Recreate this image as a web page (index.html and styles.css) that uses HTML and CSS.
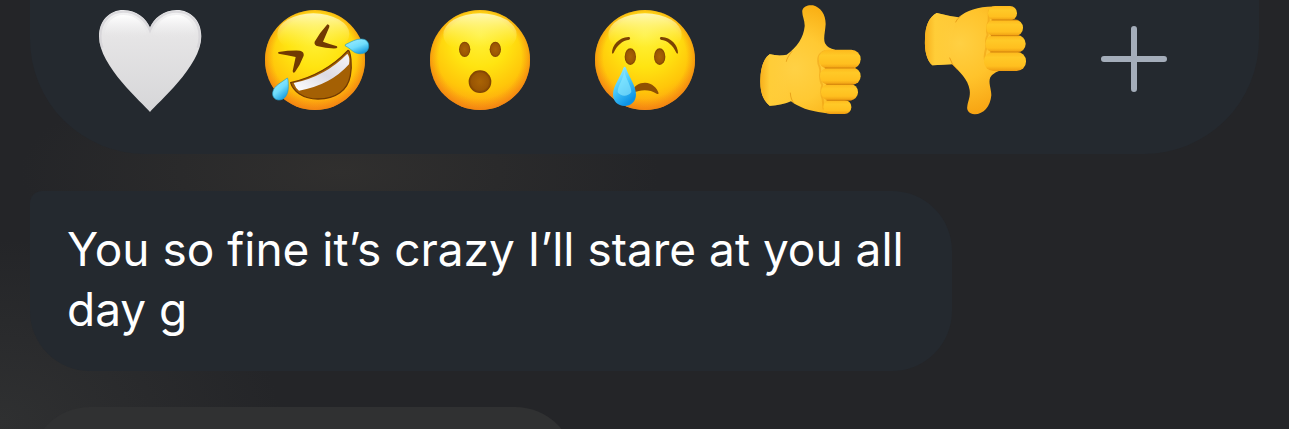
FILE: index.html
```html
<!DOCTYPE html>
<html lang="en">
<head>
  <meta charset="UTF-8">
  <meta name="viewport" content="width=device-width, initial-scale=1.0">
  <title>Message reactions</title>
  <link rel="stylesheet" href="styles.css">
</head>
<body>
  <!-- shared gradients -->
  <svg class="defs" aria-hidden="true">
    <defs>
      <radialGradient id="face" cx="195" cy="130" r="215" fx="195" fy="105" gradientUnits="userSpaceOnUse">
        <stop offset="0" stop-color="#fff23c"/>
        <stop offset="0.4" stop-color="#ffe411"/>
        <stop offset="0.7" stop-color="#ffc60a"/>
        <stop offset="1" stop-color="#fd8f14"/>
      </radialGradient>
      <radialGradient id="rim" cx="195" cy="172" r="155" gradientUnits="userSpaceOnUse">
        <stop offset="0.8" stop-color="#f58a10" stop-opacity="0"/>
        <stop offset="1" stop-color="#f07d12" stop-opacity="0.7"/>
      </radialGradient>
      <linearGradient id="shine" x1="0" y1="0" x2="0" y2="1">
        <stop offset="0" stop-color="#fffbd0" stop-opacity="0.85"/>
        <stop offset="0.8" stop-color="#fff46a" stop-opacity="0"/>
      </linearGradient>
      <linearGradient id="heart" x1="0" y1="0" x2="0" y2="1">
        <stop offset="0" stop-color="#f4f4f5"/>
        <stop offset="0.25" stop-color="#e6e5e6"/>
        <stop offset="1" stop-color="#d6d6d8"/>
      </linearGradient>
      <linearGradient id="heart-shine" x1="0" y1="0" x2="0" y2="1">
        <stop offset="0" stop-color="#ffffff"/>
        <stop offset="1" stop-color="#e6e5e6" stop-opacity="0"/>
      </linearGradient>
      <linearGradient id="tear" x1="0" y1="0" x2="0.5" y2="1">
        <stop offset="0" stop-color="#b5f3ff"/>
        <stop offset="0.5" stop-color="#4fcdfa"/>
        <stop offset="1" stop-color="#0c93e6"/>
      </linearGradient>
      <linearGradient id="tear-small" x1="0" y1="0" x2="0.6" y2="1">
        <stop offset="0" stop-color="#a5f0ff"/>
        <stop offset="0.6" stop-color="#6fdcfb"/>
        <stop offset="1" stop-color="#1d9fe0"/>
      </linearGradient>
      <linearGradient id="teeth" x1="0" y1="1" x2="1" y2="0">
        <stop offset="0" stop-color="#ffffff"/>
        <stop offset="0.5" stop-color="#dddbe3"/>
        <stop offset="1" stop-color="#f7f6f8"/>
      </linearGradient>
      <radialGradient id="mouth">
        <stop offset="0" stop-color="#a96305"/>
        <stop offset="0.75" stop-color="#9a5603"/>
        <stop offset="1" stop-color="#7b3f02"/>
      </radialGradient>
      <radialGradient id="hand" cx="150" cy="205" r="200" gradientUnits="userSpaceOnUse">
        <stop offset="0" stop-color="#ffd145"/>
        <stop offset="0.5" stop-color="#ffc933"/>
        <stop offset="1" stop-color="#f9ae12"/>
      </radialGradient>
      <radialGradient id="hand-down" cx="150" cy="130" r="220" gradientUnits="userSpaceOnUse">
        <stop offset="0" stop-color="#ffd043"/>
        <stop offset="0.5" stop-color="#ffc32b"/>
        <stop offset="1" stop-color="#f7a312"/>
      </radialGradient>
      <linearGradient id="cuff" x1="0" y1="0" x2="1" y2="0">
        <stop offset="0" stop-color="#f8b01c"/>
        <stop offset="0.3" stop-color="#ffcd38"/>
        <stop offset="1" stop-color="#ffcf42" stop-opacity="0"/>
      </linearGradient>
      <linearGradient id="finger" x1="0" y1="0" x2="0" y2="1">
        <stop offset="0" stop-color="#fdb81c"/>
        <stop offset="0.3" stop-color="#ffc927"/>
        <stop offset="0.75" stop-color="#ffbf1f"/>
        <stop offset="1" stop-color="#ee9b11"/>
      </linearGradient>
    </defs>
  </svg>

  <div class="reactions">
    <button type="button" class="reaction" aria-label="White heart">
      <svg viewBox="15 0 390 375">
        <path fill="url(#heart)" d="M210 336C189 310 57 199 57 109C57 62 89 30 130 30C170 30 199 56 210 83C221 56 250 30 290 30C332 30 364 62 364 109C364 199 231 310 210 336Z"/>
        <path fill="none" stroke="#d1d0d4" stroke-width="7" stroke-opacity="0.7" d="M67 143C61 130 61 116 61 109C61 64 91 35 130 35C170 35 198 61 210 91C222 61 250 35 290 35C330 35 359 64 359 109C359 116 359 130 353 143"/>
        <path fill="url(#heart-shine)" d="M74 104C76 69 99 45 131 45C169 45 192 72 202 103C168 123 108 121 74 104ZM218 103C228 72 251 45 289 45C321 45 343 69 346 104C312 121 252 123 218 103Z"/>
      </svg>
    </button>

    <button type="button" class="reaction" aria-label="Rolling on the floor laughing">
      <svg viewBox="0 0 390 375">
        <circle cx="195" cy="180" r="150" fill="url(#face)"/>
        <circle cx="195" cy="180" r="150" fill="url(#rim)"/>
        <ellipse cx="190" cy="102" rx="108" ry="62" fill="url(#shine)"/>
        <g fill="#713a02">
          <path d="M233 73Q240 75 238 81L219 125Q244 134 261 139Q264 143 259 145Q229 146 204 139Q191 135 194 125Q208 99 231 74Z"/>
          <path d="M86 156Q118 151 150 152Q163 155 161 167Q150 196 135 216Q129 221 128 213L137 171Q111 165 86 161Q82 158 86 156Z"/>
        </g>
        <path fill="#a46004" stroke="#713a02" stroke-width="4" stroke-linejoin="round" d="M122 248Q225 224 294 151C302 151 307 199 301 227C293 271 258 297 204 297C158 297 129 273 122 248Z"/>
        <path fill="url(#teeth)" d="M131 249Q226 229 292 161Q301 171 297 193Q241 256 147 272Q137 265 131 249Z"/>
        <path fill="url(#tear-small)" stroke="#259fc6" stroke-width="2" d="M112 234Q115 237 115 260C115 286 102 300 87 300C72 300 65 287 69 274C73 257 92 249 112 234Z"/>
        <path fill="url(#tear-small)" stroke="#259fc6" stroke-width="2" d="M286 134C305 125 316 117 334 117C349 117 357 127 356 139C355 155 344 162 328 161C309 160 303 145 286 138Z"/>
      </svg>
    </button>

    <button type="button" class="reaction" aria-label="Surprised face">
      <svg viewBox="0 0 390 375">
        <circle cx="195" cy="180" r="150" fill="url(#face)"/>
        <circle cx="195" cy="180" r="150" fill="url(#rim)"/>
        <ellipse cx="195" cy="104" rx="110" ry="64" fill="url(#shine)"/>
        <ellipse cx="149" cy="148" rx="17" ry="23" fill="url(#mouth)"/>
        <ellipse cx="241" cy="148" rx="17" ry="23" fill="url(#mouth)"/>
        <circle cx="195" cy="245" r="34" fill="url(#mouth)"/>
      </svg>
    </button>

    <button type="button" class="reaction" aria-label="Crying face">
      <svg viewBox="0 0 390 375">
        <circle cx="195" cy="180" r="150" fill="url(#face)"/>
        <circle cx="195" cy="180" r="150" fill="url(#rim)"/>
        <ellipse cx="195" cy="104" rx="110" ry="64" fill="url(#shine)"/>
        <ellipse cx="151" cy="170" rx="17" ry="25" fill="url(#mouth)"/>
        <ellipse cx="239" cy="170" rx="17" ry="25" fill="url(#mouth)"/>
        <path fill="#7c4203" d="M96 160C95 136 119 109 148 111Q153 115 148 119C126 121 111 137 101 158Q98 162 96 160ZM294 160C295 136 271 109 242 111Q237 115 242 119C264 121 279 137 289 158Q292 162 294 160Z"/>
        <path fill="#8f5003" d="M157 277C161 256 178 248 195 248C216 249 232 264 236 280Q235 284 230 281C209 267 181 268 160 279Z"/>
        <path fill="url(#tear)" d="M130 204Q134 197 138 204C146 229 168 258 168 283C168 305 153 318 134 318C113 318 99 304 99 283C99 258 123 229 130 204Z"/>
        <path fill="#8fe9ff" fill-opacity="0.6" d="M133 213C138 238 154 258 154 276C144 291 123 291 113 277C112 260 130 238 133 213Z"/>
      </svg>
    </button>

    <button type="button" class="reaction" aria-label="Thumbs up">
      <svg viewBox="0 0 390 375">
        <path fill="url(#hand)" d="M74 163Q102 169 125 164C157 142 176 112 179 79C180 61 170 46 172 31C176 18 190 14 204 16C227 22 242 43 242 72C241 94 234 116 240 130Q249 146 270 149L286 334Q262 343 235 338C194 334 161 322 138 304Q112 316 74 317C52 300 45 272 46 239C47 207 54 177 74 163Z"/>
        <path fill="url(#cuff)" d="M74 163Q102 169 125 164Q111 228 138 304Q112 316 74 317C52 300 45 272 46 239C47 207 54 177 74 163Z"/>
        <path fill="none" stroke="#df9310" stroke-width="3" stroke-linecap="round" stroke-opacity="0.7" d="M124 184Q125 174 141 154M136 279Q137 300 147 309"/>
        <path fill="none" stroke="#e9970c" stroke-width="6" stroke-opacity="0.45" d="M242 153Q214 161 221 193Q228 207 225 227Q226 246 232 255Q225 275 233 297L236 328"/>
        <rect x="221" y="149" width="126" height="57" rx="28" fill="url(#finger)"/>
        <rect x="225" y="203" width="122" height="51" rx="25" fill="url(#finger)"/>
        <rect x="228" y="252" width="111" height="49" rx="24" fill="url(#finger)"/>
        <rect x="235" y="300" width="84" height="42" rx="20" fill="url(#finger)"/>
        <path fill="none" stroke="#c87508" stroke-width="3" stroke-linecap="round" stroke-opacity="0.8" d="M241 204H327M245 253H323M246 301H319"/>
      </svg>
    </button>

    <button type="button" class="reaction" aria-label="Thumbs down">
      <svg viewBox="0 0 390 375">
        <path fill="url(#hand-down)" d="M80 39Q116 48 146 52C170 31 210 18 258 20L286 207Q252 214 241 232C234 247 244 267 244 286C241 320 221 343 194 343C178 341 169 332 172 318C174 303 182 290 179 270C174 237 148 215 126 193Q98 195 67 196C50 180 43 152 45 116C46 78 57 51 80 39Z"/>
        <path fill="url(#cuff)" d="M80 39Q116 48 146 52Q111 119 126 193Q98 195 67 196C50 180 43 152 45 116C46 78 57 51 80 39Z"/>
        <path fill="none" stroke="#df8d0d" stroke-width="3" stroke-linecap="round" stroke-opacity="0.7" d="M137 66Q140 57 151 49M119 174Q123 192 143 210"/>
        <path fill="none" stroke="#e9970c" stroke-width="6" stroke-opacity="0.45" d="M237 29L236 64Q228 83 233 105Q226 116 229 143Q221 170 226 186Q231 202 249 208"/>
        <rect x="234" y="18" width="87" height="43" rx="21" fill="url(#finger)"/>
        <rect x="229" y="59" width="110" height="49" rx="24" fill="url(#finger)"/>
        <rect x="226" y="106" width="121" height="51" rx="25" fill="url(#finger)"/>
        <rect x="222" y="155" width="126" height="58" rx="28" fill="url(#finger)"/>
        <path fill="none" stroke="#c87508" stroke-width="3" stroke-linecap="round" stroke-opacity="0.8" d="M246 60H321M244 107H325M242 156H329"/>
      </svg>
    </button>

    <button type="button" class="reaction more" aria-label="More reactions">
      <svg viewBox="0 0 390 375">
        <path fill="none" stroke="#a4adba" stroke-width="18" stroke-linecap="round" d="M195 87V267M105 177H285"/>
      </svg>
    </button>
  </div>

  <main class="chat">
    <p class="bubble">You so fine it’s crazy I’ll stare at you all day g</p>
    <div class="bubble-next"></div>
  </main>
</body>
</html>
```
FILE: styles.css
```css
* {
  box-sizing: border-box;
}

body {
  margin: 0;
  height: 100vh;
  overflow: hidden;
  display: flex;
  flex-direction: column;
  gap: 37px;
  padding: 0 30px;
  background:
    radial-gradient(ellipse 320px 110px at 340px 172px, #302f2e, transparent),
    radial-gradient(ellipse 280px 180px at 0 420px, #2f3031, transparent),
    #242528;
  font-family: Inter, "Liberation Sans", sans-serif;
  color: #fff;
}

.defs {
  position: absolute;
  width: 0;
  height: 0;
}

.reactions {
  display: flex;
  flex-shrink: 0;
  height: 154px;
  padding: 0 49px 0 38px;
  background: #24292f;
  border-radius: 0 0 115px 115px;
}

.reaction {
  flex: 165 1 0;
  display: flex;
  justify-content: center;
  align-items: flex-start;
  padding: 0;
  border: none;
  background: none;
  cursor: pointer;
}

.reaction.more {
  flex-grow: 153;
}

.reaction svg {
  width: 130px;
  height: 125px;
}

.chat {
  flex: 1;
  min-height: 0;
  overflow: hidden;
  display: flex;
  flex-direction: column;
  align-items: flex-start;
  gap: 36px;
}

.bubble {
  flex-shrink: 0;
  margin: 0;
  max-width: 75%;
  padding: 28px 37px 32px;
  background: #24292f;
  border-radius: 12px 60px 60px 60px;
  font-size: 46px;
  line-height: 60px;
}

/* next message, only its top edge is in view */
.bubble-next {
  width: 545px;
  max-width: 75%;
  height: 120px;
  flex-shrink: 0;
  background: #303132;
  border-radius: 60px;
}
```
